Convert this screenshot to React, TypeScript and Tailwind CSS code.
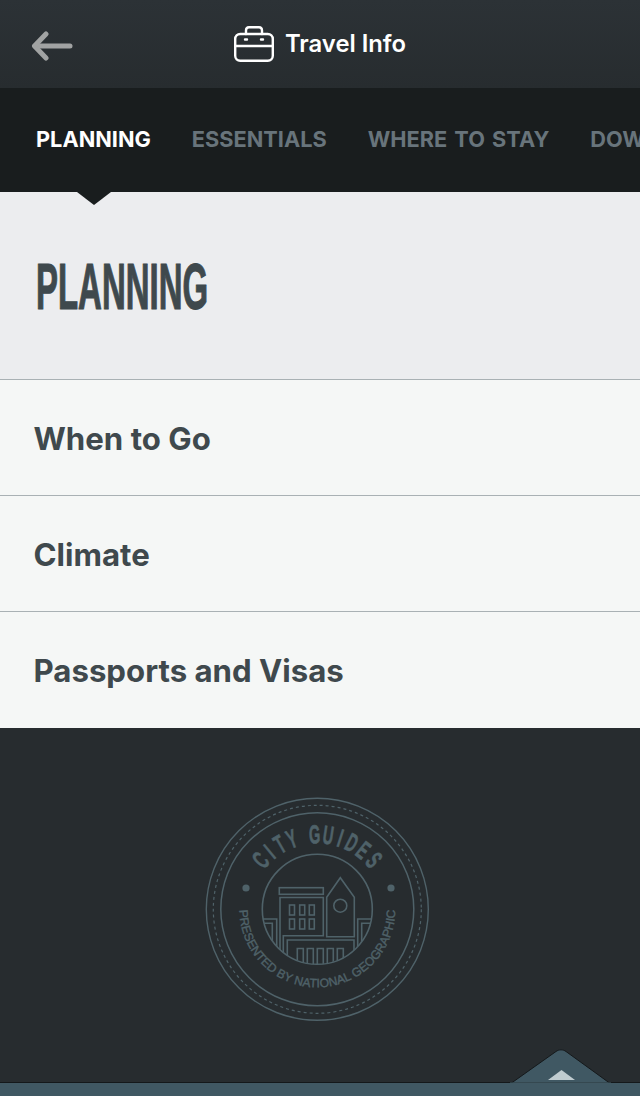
import React from "react";

const tabs = ["PLANNING", "ESSENTIALS", "WHERE TO STAY", "DOWNLOADS"];
const rows = ["When to Go", "Climate", "Passports and Visas"];

const BackArrow = () => (
  <svg width="42" height="30" viewBox="0 0 42 30" fill="none" stroke="#a1a3a3" strokeWidth="5" strokeLinecap="round" strokeLinejoin="round">
    <path d="M39 15H4" />
    <path d="M15 3L3.5 15L15 27" />
  </svg>
);

const Case = () => (
  <svg width="40" height="36" viewBox="0 0 40 36" fill="none" stroke="#fff" strokeWidth="2.4" strokeLinecap="round">
    <rect x="1.2" y="8" width="37.6" height="26.8" rx="5" />
    <path d="M1.2 20H38.8" />
    <path d="M12 8V4.5C12 2.5 13.2 1.2 15 1.2H25C26.8 1.2 28 2.5 28 4.5V8" />
    <path d="M11 13.5H13M27 13.5H29" />
  </svg>
);

const cx = 122.3;
const cy = 119.3;
const stroke = "#4f6269";

const point = (deg: number, r: number) => {
  const a = ((deg - 90) * Math.PI) / 180;
  return [cx + r * Math.cos(a), cy + r * Math.sin(a)];
};

const cityLetters = [
  ["C", -49],
  ["I", -39.5],
  ["T", -30],
  ["Y", -20],
  ["G", -2],
  ["U", 8.5],
  ["I", 18],
  ["D", 27.5],
  ["E", 38],
  ["S", 49],
] as const;

const Badge = () => (
  <svg width="245" height="240" viewBox="0 0 245 240" fill="none" stroke={stroke} strokeWidth="1.6">
    <defs>
      <clipPath id="inner">
        <circle cx={cx} cy={cy} r="55" />
      </clipPath>
      <path id="bottomArc" d={`M${cx - 78} ${cy} A78 78 0 0 0 ${cx + 78} ${cy}`} />
    </defs>
    <circle cx={cx} cy={cy} r="111" strokeWidth="1.4" />
    <circle cx={cx} cy={cy} r="104" strokeWidth="1.2" strokeDasharray="3 3" />
    <circle cx={cx} cy={cy} r="96.5" strokeWidth="1.5" />
    <circle cx={cx} cy={cy} r="55" strokeWidth="1.6" />
    <circle cx="51" cy="98" r="3.6" fill={stroke} stroke="none" />
    <circle cx="196" cy="98" r="3.6" fill={stroke} stroke="none" />
    {cityLetters.map(([ch, deg], i) => {
      const [x, y] = point(deg, 66);
      return (
        <text
          key={i}
          transform={`translate(${x} ${y}) rotate(${deg}) scale(0.56 1)`}
          textAnchor="middle"
          fill={stroke}
          stroke={stroke}
          strokeWidth="0.6"
          fontFamily="'Liberation Sans', sans-serif"
          fontWeight="700"
          fontSize="26"
        >
          {ch}
        </text>
      );
    })}
    <text fill={stroke} stroke={stroke} strokeWidth="0.4" fontFamily="'Liberation Sans', sans-serif" fontSize="12.2">
      <textPath href="#bottomArc" startOffset="50%" textAnchor="middle">
        PRESENTED BY NATIONAL GEOGRAPHIC
      </textPath>
    </text>
    <g clipPath="url(#inner)">
      <rect x="84.3" y="97.7" width="44" height="6.6" />
      <path d="M85 180V107.5H128.3V145.7H88.3V180" />
      <rect x="94.5" y="115" width="5" height="10" />
      <rect x="104.7" y="115" width="5" height="10" />
      <rect x="114.3" y="115" width="5" height="10" />
      <rect x="94.5" y="129" width="5" height="10" />
      <rect x="104.7" y="129" width="5" height="10" />
      <rect x="114.3" y="129" width="5" height="10" />
      <path d="M131.7 107.3L145.3 87.7L159.3 107.3V146.7H131.7Z" />
      <circle cx="145.3" cy="115.7" r="6.5" />
      <path d="M92.3 180V150H159V180" />
      <path d="M102.3 180V158.5H108.3V180M112.3 180V158.5H118.3V180M122.3 180V158.5H128.3V180M132.3 180V158.5H138.3V180M142.3 180V158.5H148.3V180" />
      <path d="M60 129H81.7V160M60 133.3H77.3V160" />
      <path d="M185 129H162.7V160M185 133.3H166.7V160" />
    </g>
  </svg>
);

export default function App() {
  return (
    <div className="relative flex h-[1096px] w-[640px] flex-col overflow-hidden font-['Inter',sans-serif]">
      <header className="flex h-[88px] items-center bg-gradient-to-b from-[#2c3236] to-[#272c2f]">
        <div className="ml-[31px] mt-[3px] flex">
          <BackArrow />
        </div>
        <div className="ml-[161px] flex items-center gap-[11px]">
          <Case />
          <span className="text-[23.8px] font-semibold text-white">Travel Info</span>
        </div>
      </header>

      <nav className="relative flex h-[104px] items-center gap-[41px] overflow-hidden whitespace-nowrap bg-[#191d1e] pb-[2px] pl-9">
        {tabs.map((t, i) => (
          <span
            key={t}
            className={`text-[21.75px] font-bold [word-spacing:2px] ${i === 0 ? "text-white" : "text-[#68747b]"}`}
          >
            {t}
          </span>
        ))}
      </nav>

      <section className="relative h-[187px] bg-[#ecedef] pl-9">
        <div className="absolute left-[77px] top-0 h-0 w-0 border-x-[17px] border-t-[13px] border-x-transparent border-t-[#191d1e]" />
        <h1 className="origin-left scale-x-[0.515] whitespace-nowrap pt-[59px] font-['Liberation_Sans',sans-serif] text-[64px] font-bold leading-[72px] text-[#3f494d] [-webkit-text-stroke:1.2px_#3f494d]">
          PLANNING
        </h1>
      </section>

      <ul className="bg-[#f5f7f6] pb-px">
        {rows.map((r) => (
          <li key={r} className="flex h-[116px] items-center border-t border-[#a9b1b4] pl-[33.5px] pt-[3px] text-[31.2px] font-bold text-[#3f494d]">
            {r}
          </li>
        ))}
      </ul>

      <footer className="flex h-[354px] justify-center bg-[#272c2f] pt-[62px]">
        <div className="-ml-[5px] h-[240px]">
          <Badge />
        </div>
      </footer>

      <div className="h-[14px] border-t border-[#14181a] bg-[#405863]" />

      <svg className="absolute left-[510px] top-[1048px]" width="101" height="36" viewBox="0 0 101 36">
        <path d="M1.5 35L46 3.5C49 1.3 53 1.3 56 3.5L99.5 35Z" fill="#405863" stroke="#14181a" strokeWidth="1" />
        <path d="M0 34.6H101V36H0Z" fill="#405863" />
        <path d="M38 32L51.5 22L65 32Z" fill="#c0ccd0" />
      </svg>
    </div>
  );
}
